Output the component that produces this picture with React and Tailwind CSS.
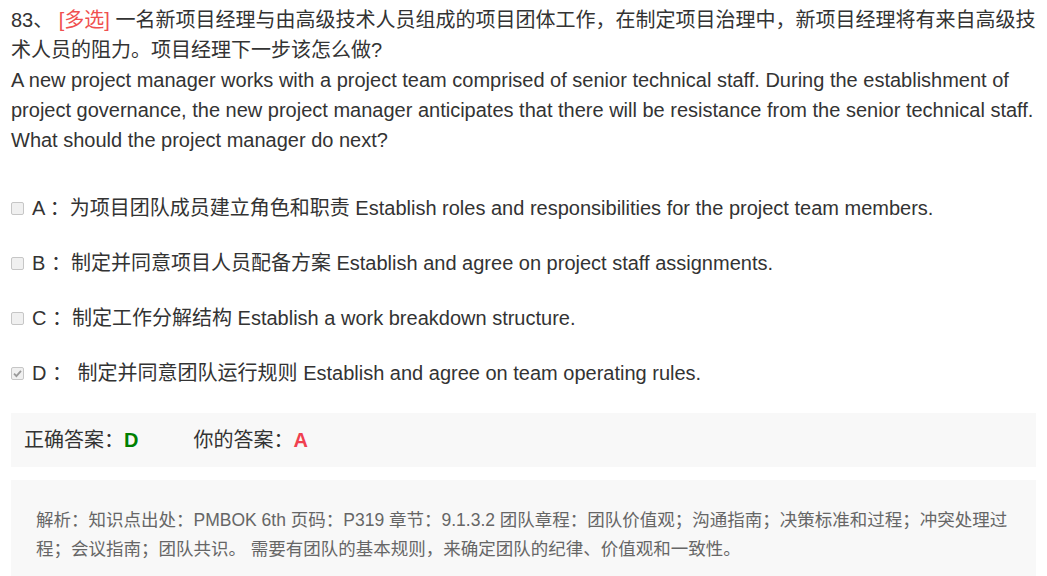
import React from 'react';

const options = [
  { key: 'A', text: '为项目团队成员建立角色和职责 Establish roles and responsibilities for the project team members.', checked: false },
  { key: 'B', text: '制定并同意项目人员配备方案 Establish and agree on project staff assignments.', checked: false },
  { key: 'C', text: '制定工作分解结构 Establish a work breakdown structure.', checked: false },
  { key: 'D', text: ' 制定并同意团队运行规则 Establish and agree on team operating rules.', checked: true },
];

const Checkbox = ({ checked }) => (
  <span className="inline-flex w-[13px] h-[13px] rounded-[2px] border border-[#c6c6c6] bg-[#f0f0f0] items-center justify-center mr-[8px] shrink-0">
    {checked && (
      <svg viewBox="0 0 12 12" className="w-[11px] h-[11px]">
        <path d="M2.2 6.2 L4.8 8.8 L9.8 3.2" fill="none" stroke="#9a9a9a" strokeWidth="2" />
      </svg>
    )}
  </span>
);

export default function App() {
  return (
    <div
      className="bg-white text-[#333] px-[11px] pt-[5px] min-h-[576px]"
      style={{ fontFamily: '"Liberation Sans", Arial, "Noto Sans CJK SC", sans-serif' }}
    >
      <div className="text-[20px] leading-[30px]">
        <p>
          83、 <span className="text-[#f05050]">[多选]</span> 一名新项目经理与由高级技术人员组成的项目团体工作，在制定项目治理中，新项目经理将有来自高级技术人员的阻力。项目经理下一步该怎么做?
        </p>
        <p>
          A new project manager works with a project team comprised of senior technical staff. During the establishment of project governance, the new project manager anticipates that there will be resistance from the senior technical staff. What should the project manager do next?
        </p>
      </div>

      <div className="mt-[38px] flex flex-col gap-[25px]">
        {options.map((o) => (
          <label key={o.key} className="flex items-center text-[20px] leading-[30px]">
            <Checkbox checked={o.checked} />
            <span className="whitespace-pre">{o.key} ：</span>
            <span className="whitespace-pre">{o.text}</span>
          </label>
        ))}
      </div>

      <div className="mt-[25px] bg-[#f8f8f8] h-[54px] flex items-center px-[13px] text-[20px]">
        <span>正确答案：</span>
        <span className="text-[#008000] font-bold">D</span>
        <span className="ml-[55px]">你的答案：</span>
        <span className="text-[#f0404f] font-bold">A</span>
      </div>

      <div className="mt-[13px] bg-[#f8f8f8] pt-[26px] pb-[16px] px-[25px] text-[17.5px] leading-[29px] text-[#666]">
        解析：知识点出处：PMBOK 6th 页码：P319 章节：9.1.3.2 团队章程：团队价值观；沟通指南；决策标准和过程；冲突处理过程；会议指南；团队共识。 需要有团队的基本规则，来确定团队的纪律、价值观和一致性。
      </div>
    </div>
  );
}
